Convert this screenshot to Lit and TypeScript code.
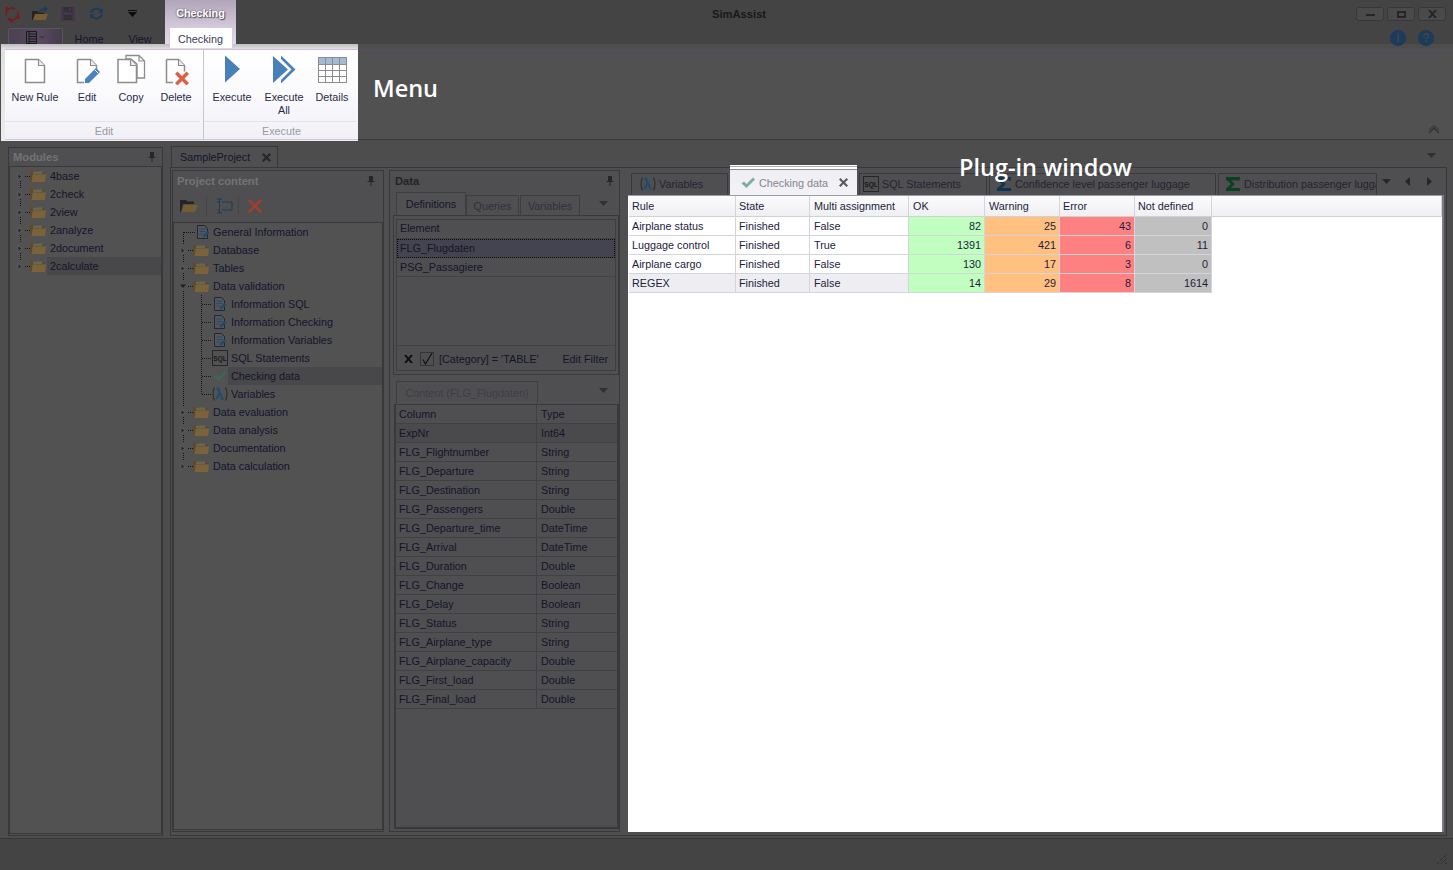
import { LitElement, html, svg, css } from "lit";
import { customElement } from "lit/decorators.js";

const folder = html`<svg class="ic" width="16" height="14" viewBox="0 0 16 14"><path d="M0 2h6l1.500 1.500H15V5H2.500L1 13H0z" fill="#5c4a2a"/><path d="M1.500 13 2.800 5.500H16L15 13z" fill="#7c6238"/><path d="M3 2.500h9V5H3z" fill="#8a8a7c" opacity=".4"/></svg>`;
const info = html`<svg class="ic" width="16" height="16" viewBox="0 0 16 16"><path d="M2.500 1.500h7l3 3v10h-10z" fill="#565659" stroke="#26262e"/><path d="M4.500 5h6M4.500 7.500h6M4.500 10h3" stroke="#214a72"/><path d="M7.500 13.500 8 11l4.500-4 2 2-4.500 4z" fill="#214a72"/></svg>`;
const sql = html`<svg class="ic" width="16" height="16" viewBox="0 0 16 16"><rect x=".5" y=".5" width="15" height="15" fill="none" stroke="#26262a"/><text x="8" y="11" font-size="6.500" font-weight="700" text-anchor="middle" font-family="Liberation Sans" fill="#18181a">SQL</text></svg>`;
const check = (c = "#3e6658") => html`<svg class="ic" width="16" height="16" viewBox="0 0 16 16"><path d="M1.500 8.500 4 6.500l2.500 2.500L13 2.500l2 2-8.500 8.500z" fill="${c}"/></svg>`;
const lambda = html`<svg class="ic" width="16" height="16" viewBox="0 0 16 16"><path d="M2.500 1.500C.6 5 .6 11 2.500 14.500M13.500 1.500c1.900 3.500 1.900 9.500 0 13" fill="none" stroke="#2e2e32" stroke-width="1.200"/><path d="M4.500 2.500H6l4.500 10.500h1M7.500 7 4.500 13" fill="none" stroke="#214a72" stroke-width="2.200"/></svg>`;
const sigma = (c: string) => html`<svg class="ic" width="16" height="16" viewBox="0 0 16 16"><path d="M1 1h14v3.500h-9l4 3.500-4 4h9V15H1v-2.500L6 8 1 3.500z" fill="${c}"/></svg>`;
const pin = html`<svg class="pin" width="8" height="10" viewBox="0 0 8 10"><path d="M2 0h4v5h1.500v1H4.500v4h-1V6H.5V5H2z" fill="#26262a"/></svg>`;
const drop = html`<svg class="drop" width="9" height="5" viewBox="0 0 9 5"><path d="M0 0h9L4.500 5z" fill="#303032"/></svg>`;

const dots = "stroke:#141416;stroke-dasharray:1 1;fill:none";

function rootGutter(kind: string, top: boolean, bottom: boolean) {
  return html`<svg class="gut" width="19" height="18" viewBox="0 0 19 18">
    ${top ? svg`<path d="M9.500 0v4" style=${dots}/>` : ""}
    ${bottom ? svg`<path d="M9.500 14v4" style=${dots}/>` : ""}
    <path d="M14 9.500h5" style=${dots}/>
    ${kind === "open"
      ? svg`<path d="M6 7.500h6l-3 3.500z" fill="#1f1f21"/>`
      : svg`<path d="M7 6.500v6l4-3z" fill="#2a2a2c" stroke="#767678" stroke-width=".5"/>`}
  </svg>`;
}
const infoGutter = html`<svg class="gut" width="21" height="18" viewBox="0 0 21 18"><path d="M9.500 9v9M10 9.500h11" style=${dots}/></svg>`;
function childGutter(last: boolean) {
  return html`<svg class="gut" width="38" height="18" viewBox="0 0 38 18"><path d="M9.500 0v18M27.500 0v${last ? 10 : 18}M28 9.500h10" style=${dots}/></svg>`;
}

const modules = ["4base", "2check", "2view", "2analyze", "2document", "2calculate"];
const project: { t: string; k: string; i?: any; sel?: boolean; last?: boolean }[] = [
  { t: "General Information", k: "info" },
  { t: "Database", k: "closed" },
  { t: "Tables", k: "closed" },
  { t: "Data validation", k: "open" },
  { t: "Information SQL", k: "child", i: info },
  { t: "Information Checking", k: "child", i: info },
  { t: "Information Variables", k: "child", i: info },
  { t: "SQL Statements", k: "child", i: sql },
  { t: "Checking data", k: "child", i: check(), sel: true },
  { t: "Variables", k: "child", i: lambda, last: true },
  { t: "Data evaluation", k: "closed" },
  { t: "Data analysis", k: "closed" },
  { t: "Documentation", k: "closed" },
  { t: "Data calculation", k: "closed" },
];
const columns: [string, string][] = [
  ["ExpNr", "Int64"], ["FLG_Flightnumber", "String"], ["FLG_Departure", "String"], ["FLG_Destination", "String"],
  ["FLG_Passengers", "Double"], ["FLG_Departure_time", "DateTime"], ["FLG_Arrival", "DateTime"], ["FLG_Duration", "Double"],
  ["FLG_Change", "Boolean"], ["FLG_Delay", "Boolean"], ["FLG_Status", "String"], ["FLG_Airplane_type", "String"],
  ["FLG_Airplane_capacity", "Double"], ["FLG_First_load", "Double"], ["FLG_Final_load", "Double"],
];
const results: (string | number)[][] = [
  ["Airplane status", "Finished", "False", 82, 25, 43, 0],
  ["Luggage control", "Finished", "True", 1391, 421, 6, 11],
  ["Airplane cargo", "Finished", "False", 130, 17, 3, 0],
  ["REGEX", "Finished", "False", 14, 29, 8, 1614],
];

const pageIcon = html`<svg class="big" width="32" height="32" viewBox="0 0 32 32"><path d="M6.500 6.500h13l6 6v17h-19z" fill="#fff" stroke="#8c8c8c" stroke-width="1.500"/><path d="M19.500 6.500v6h6" fill="#eee" stroke="#8c8c8c" stroke-width="1.200"/></svg>`;
const editIcon = html`<svg class="big" width="32" height="32" viewBox="0 0 32 32"><path d="M6.500 6.500h13l6 6v8M13 29.500H6.500v-23" fill="#fff" stroke="#8c8c8c" stroke-width="1.500"/><path d="M19.500 6.500v6h6" fill="#eee" stroke="#8c8c8c" stroke-width="1.200"/><path d="M14 26 25 15l4 4-11 11h-4z" fill="#4a82bd"/><path d="M24 17l3 3" stroke="#fff"/></svg>`;
const copyIcon = html`<svg class="big" width="32" height="32" viewBox="0 0 32 32"><path d="M11 2.500h13l5.500 5.500v17H22V11l-6-5h-5z" fill="#fff" stroke="#8c8c8c" stroke-width="1.300"/><path d="M24 2.500v5.500h5.500" fill="none" stroke="#8c8c8c" stroke-width="1.200"/><path d="M3 6.500h12.500l6 6v17H3z" fill="#fff" stroke="#8c8c8c" stroke-width="1.500"/><path d="M15.500 6.500v6h6" fill="#eee" stroke="#8c8c8c" stroke-width="1.200"/></svg>`;
const delIcon = html`<svg class="big" width="32" height="32" viewBox="0 0 32 32"><path d="M6.500 6.500h12l6 6v6M13 29.500H6.500v-23" fill="#fff" stroke="#8c8c8c" stroke-width="1.500"/><path d="M18.500 6.500v6h6" fill="#eee" stroke="#8c8c8c" stroke-width="1.200"/><path d="M15 21l2.500-2.500 4.500 4.500 4.500-4.500L29 21l-4.500 4.500L29 30l-2.500 2.500L22 28l-4.500 4.500L15 30l4.500-4.500z" fill="#dc6045"/></svg>`;
const exeIcon = html`<svg class="big" width="32" height="32" viewBox="0 0 32 32"><path d="M9 2.500v27l15-13.500z" fill="#4a80ba"/></svg>`;
const exeAllIcon = html`<svg class="big" width="32" height="32" viewBox="0 0 32 32"><path d="M13 2.500l14.500 14L13 30.500z" fill="#4a80ba"/><path d="M13 6 23.500 16.500 13 27z" fill="#fff"/><path d="M5 3 20 16.500 5 30z" fill="#4a80ba"/></svg>`;
const gridIcon = html`<svg class="big" width="32" height="32" viewBox="0 0 32 32"><rect x="2.500" y="4.500" width="28" height="25" fill="#fff" stroke="#8c8c8c"/><rect x="3" y="5" width="27" height="6" fill="#a3bcd6"/><path d="M9.500 5v24M16.500 5v24M23.500 5v24" stroke="#8c8c8c"/><path d="M3 11.500h27M3 17.500h27M3 23.500h27" stroke="#8c8c8c"/></svg>`;

@customElement("app-root")
export class AppRoot extends LitElement {
  static styles = css`
    :host { display: block; width: 1453px; height: 870px; overflow: hidden; position: relative; background: #4d4d4e;
      font: 10.8px "Liberation Sans", Arial, sans-serif; color: #14142a; }
    * { box-sizing: border-box; }
    svg { display: block; flex: none; }
    .app { display: flex; flex-direction: column; height: 870px; }
    .top { display: grid; grid-template-columns: 165px 71px 1fr; grid-template-rows: 27px 17px; height: 44px; background: #444445; }
    .qat { display: flex; align-items: center; padding-left: 4px; gap: 12px; }
    .qat .slot { width: 16px; display: flex; justify-content: center; }
    .qat .slot.last { margin-left: 8px; }
    .ctx { grid-row: 1 / 3; grid-column: 2; background: linear-gradient(#b0a6b9, #d2c8d9 60%, #e2dae7); display: flex; flex-direction: column; align-items: center; position: relative; z-index: 3; }
    .ctx-t { height: 28px; line-height: 27px; color: #fff; text-shadow: 0 0 2px #5a5060, 1px 1px 1px #5a5060; font-weight: 700; }
    .ctx-tab { width: 64px; height: 21px; background: #fff; border: 1px solid #d8c8e2; border-bottom: 0; text-align: center; line-height: 22px; color: #3a3a58; }
    .title { display: flex; align-items: center; padding-left: 476px; font-weight: 700; font-size: 11.2px; color: #18181a; }
    .wins { margin-left: auto; display: flex; gap: 3px; padding: 7px 7px 0 0; align-self: start; }
    .win { width: 28px; height: 14px; border: 1px solid #38383a; border-radius: 3px; display: flex; align-items: center; justify-content: center; background: #4a4a4b; }
    .tabs { display: flex; align-items: flex-start; padding: 1px 0 0 8px; height: 17px; }
    .appbtn { width: 55px; height: 19px; border: 1px solid #5a5460; border-radius: 2px; background: linear-gradient(90deg, #4b4152, #574a60 60%, #443b4b); display: flex; align-items: center; justify-content: center; gap: 2px; position: relative; }
    .tb { line-height: 22px; text-align: center; color: #14142a; }
    .tb.h { width: 52px; }
    .tb.v { width: 50px; }
    .help { display: flex; justify-content: flex-end; gap: 12px; padding: 3px 19px 0 0; }
    .circ { width: 16px; height: 16px; border-radius: 50%; background: #1b3c5c; color: #444445; font: 700 12px/16px "Liberation Sans", sans-serif; text-align: center; }
    .ribbon { display: flex; height: 97px; flex: none; }
    .hl { width: 357px; margin-left: 1px; padding: 5px 0 1px 4px; background: linear-gradient(#bdbdbd, #e0e0e0 5px, #ececee); position: relative; z-index: 2; }
    .hl-in { height: 91px; background: linear-gradient(#fff, #fafafd 50%, #f0f0f6); border-top: 1px solid #d4bae4; border-bottom: 1px solid #d8c6e2; display: grid; grid-template-columns: 198px 156px; }
    .grp { display: flex; flex-direction: column; }
    .grp + .grp { border-left: 1px solid #c8c8cc; }
    .btns { display: grid; height: 72px; border-bottom: 1px solid #e2e2e8; margin: 0 3px 0 0; padding-top: 3px; }
    .g1 { grid-template-columns: 60px 44px 44px 46px; }
    .g2 { grid-template-columns: 56px 48px 48px; }
    .b { display: flex; flex-direction: column; align-items: center; text-align: center; line-height: 13px; color: #2a2a48; }
    .b .big { margin-bottom: 6px; }
    .cap { text-align: center; color: #9a9aa4; line-height: 18px; height: 18px; }
    .rrest { flex: 1; margin: 4px 0 1px; background: #515152; border-top: 1px solid #54495a; border-bottom: 1px solid #38383a; display: flex; align-items: flex-end; justify-content: flex-end; padding: 0 13px 5px 0; }
    .work { flex: 1; min-height: 0; display: flex; gap: 7px; padding: 6px 6px 2px 8px; background: #4d4d4e; }
    .modules { width: 155px; border: 1px solid #38383a; display: flex; flex-direction: column; background: #515152; }
    .ph { height: 18px; flex: none; display: flex; align-items: center; justify-content: space-between; padding: 0 6px 0 4px; font-weight: 700; font-size: 11.2px; color: #737375; background: #4f4f51; }
    .ph.on { color: #232325; padding-left: 5px; padding-right: 5px; }
    .ph.pc { padding-right: 8px; }
    .box { flex: 1; min-height: 0; border: 1px solid #38383a; background: #525253; }
    .row { height: 18px; display: flex; align-items: center; }
    .row .ic { flex: none; }
    .lab { flex: 1; height: 18px; line-height: 18px; margin-left: 1px; padding-left: 3px; white-space: nowrap; color: #14142a; }
    .lab.sel { background: #48484a; }
    .modules .box { margin: 0 0 1px 0; padding-left: 1px; }
    .doc { flex: 1; min-width: 0; display: flex; flex-direction: column; margin-top: -1px; }
    .dstrip { height: 21px; flex: none; display: flex; align-items: flex-end; padding-left: 1px; justify-content: space-between; }
    .dstrip .drop { margin: 0 11px 9px 0; }
    .dtab { width: 107px; height: 21px; border: 1px solid #38383a; border-bottom: 0; background: #4f4f51; display: flex; align-items: center; justify-content: space-between; padding: 0 6px 0 8px; color: #14142a; }
    .dbody { flex: 1; min-height: 0; border: 1px solid #38383a; padding: 2px 1px 3px 1px; display: flex; gap: 5px; background: #4f4f51; }
    .pcontent { width: 212px; border: 1px solid #38383a; padding-top: 1px; display: flex; flex-direction: column; }
    .pcontent .box { margin: 0 0 1px 0; }
    .pcontent .lab { padding-left: 3px; margin-left: 0; }
    .pcontent .lab.r { padding-left: 4px; }
    .pcontent .lab.g { padding-left: 2px; }
    .ptool { height: 32px; flex: none; display: flex; align-items: center; padding-left: 7px; }
    .ptool .sepv { width: 1px; height: 18px; background: #454547; margin: 0 8px 0 5px; }
    .ptool .f { margin-right: 3px; }
    .data { width: 231px; border: 1px solid #38383a; padding-top: 1px; display: flex; flex-direction: column; }
    .dtabs { height: 25px; flex: none; display: flex; align-items: flex-end; padding: 0 0 0 6px; }
    .dtabs .drop { margin: 0 11px 9px auto; }
    .t2 { height: 20px; border: 1px solid #3e3e40; border-bottom: 0; line-height: 20px; text-align: center; color: #30303c; margin-right: 1px; }
    .t2.q { width: 53px; }
    .t2.v { width: 60px; }
    .t2.act { width: 70px; height: 23px; line-height: 22px; background: #515153; margin-right: 0; color: #14142a; }
    .t2.w { width: 142px; height: 23px; line-height: 23px; color: #3e3e48; }
    .dbox { height: 160px; flex: none; margin: 0 0 0 3px; width: 226px; border: 1px solid #3a3a3c; padding: 3px 2px; }
    .dinner { height: 100%; border: 1px solid #3e3e40; display: flex; flex-direction: column; }
    .drow { height: 19px; line-height: 18px; padding-left: 3px; border-bottom: 1px solid #434345; flex: none; color: #14142a; }
    .drow.h { line-height: 16px; }
    .drow.sel { background: #43444f; outline: 1px dotted #0a0a0a; outline-offset: -1px; }
    .fill { flex: 1; }
    .filter { height: 25px; border-top: 1px solid #434345; display: flex; align-items: center; padding: 2px 0 0 7px; flex: none; }
    .filter .ck { width: 14px; height: 14px; border: 1px solid #343436; margin: 0 5px 0 7px; }
    .filter .ef { margin-left: auto; padding-right: 7px; }
    .mid { height: 29px; flex: none; display: flex; align-items: flex-end; padding-left: 6px; }
    .mid .drop { margin: 0 11px 11px auto; }
    .cgrid { flex: 1; min-height: 0; margin: 0 0 2px 4px; width: 225px; border: 2px solid #39393b; border-top-width: 1px; }
    .crow { display: grid; grid-template-columns: 140px 1fr; height: 19px; border-bottom: 1px solid #414143; line-height: 18px; }
    .crow > div { padding-left: 3px; color: #14142a; }
    .crow > div + div { border-left: 1px solid #414143; padding-left: 4px; }
    .crow.sel { background: #4a4a4c; }
    .plugin { flex: 1; min-width: 0; display: flex; flex-direction: column; }
    .ptabs { height: 25px; flex: none; display: flex; align-items: flex-end; padding-left: 6px; gap: 2px; }
    .pt { height: 22px; border: 1px solid #3a3a3c; border-bottom: 0; display: flex; align-items: center; gap: 3px; padding: 0 0 2px 8px; color: #24242e; white-space: nowrap; overflow: hidden; flex: none; }
    .pt.a { width: 97px; }
    .pt.c { width: 128px; padding-left: 3px; }
    .pt.d { width: 227px; padding-left: 6px; }
    .pt.e { width: 159px; padding-left: 6px; }
    .pt.act { width: 127px; height: 30px; background: linear-gradient(#fff 0 1px, #aeaeae 1px 2px, #fff 2px 4px, #8c8c94 4px 5px, #eeeef3 5px, #f3f3f7); color: #85858d; padding: 5px 9px 0 10px; position: relative; z-index: 1; border: 0; }
    .pt.act span { flex: 1; }
    .nav { display: flex; align-items: center; gap: 14px; padding: 0 0 6px 3px; height: 22px; }
    .nav .s { margin-left: 3px; }
    .wbox { flex: 1; min-height: 0; margin: 0 3px 0 3px; background: #fff; border-top: 1px solid #9c9ca8; box-shadow: 2px 0 0 #7a7a88; display: flex; flex-direction: column; padding: 0 0 0 1px; }
    .tg { display: grid; grid-template-columns: 107px 74px 99px 76px 75px 75px 77px 1fr; }
    .th { height: 21px; background: linear-gradient(#fbfbfc, #f0f0f3); border-right: 1px solid #d4d4dc; border-bottom: 1px solid #d0d0d8; padding-left: 3px; line-height: 20px; color: #1c1c40; }
    .th.wide { padding-left: 4px; }
    .th:last-child { border-right: 0; }
    .td { height: 19px; border-right: 1px solid #d4d4dc; border-bottom: 1px solid #d4d4dc; padding: 0 3px; line-height: 18px; color: #1c1c40; }
    .td.wide { padding-left: 4px; }
    .td.alt { background: #eeeef2; }
    .td.n { text-align: right; }
    .ok { background: #c0ffc0 !important; }
    .warn { background: #ffc080 !important; }
    .err { background: #ff8080 !important; }
    .nd { background: #c0c0c0 !important; }
    .spacer { grid-column: 8; }
    .status { height: 32px; flex: none; background: #444445; border-top: 1px solid #38383a; display: flex; align-items: flex-end; justify-content: flex-end; padding: 0 5px 5px 0; }
    .note { position: absolute; font: 600 23.5px/32px "Open Sans", sans-serif; color: #fff; white-space: nowrap; z-index: 5; }
    .note.m { left: 373px; top: 72px; }
    .note.p { left: 959px; top: 151px; }
  `;

  render() {
    return html`<div class="app">
      <div class="top">
        <div class="qat">
          <div class="slot"><svg width="18" height="18" viewBox="0 0 18 18"><circle cx="9" cy="9" r="6" fill="none" stroke="#6e1c1c" stroke-width="1.500" stroke-dasharray="14 3"/><circle cx="4" cy="4" r="2" fill="#7a1c1c"/><circle cx="15" cy="12" r="2" fill="#7a1c1c"/><circle cx="8" cy="15.500" r="2" fill="#7a1c1c"/></svg></div>
          <div class="slot"><svg width="18" height="16" viewBox="0 0 18 16"><path d="M1 5h5l1.500 1.500H13V14H1z" fill="#242426"/><path d="M2 14l2-6h13l-2.500 6z" fill="#765c30"/><path d="M7 7c0-3 3-4.500 6-4.500V0l4 3-4 3V4c-2 0-4 1-6 3z" fill="#1b3c5c"/></svg></div>
          <div class="slot"><svg width="16" height="16" viewBox="0 0 16 16"><path d="M1 1h13l1 1v13H1z" fill="#46344f"/><path d="M3.500 1h9v5h-9zM3.500 9h9v5h-9z" fill="#323234"/><rect x="9" y="2" width="2" height="3" fill="#46344f"/></svg></div>
          <div class="slot"><svg width="17" height="15" viewBox="0 0 17 15"><path d="M2 7a6.500 6.500 0 0 1 11-3.500L15 2v5h-5l2-1.500A4.500 4.500 0 0 0 4 7zM15 8a6.500 6.500 0 0 1-11 3.500L2 13V8h5L5 9.500A4.500 4.500 0 0 0 13 8z" fill="#1b3c5c"/></svg></div>
          <div class="slot last"><svg width="9" height="7" viewBox="0 0 9 7"><path d="M0 0h9v1H0zM0 2h9L4.500 7z" fill="#0c0c0c"/></svg></div>
        </div>
        <div class="ctx">
          <div class="ctx-t">Checking</div>
          <div class="ctx-tab">Checking</div>
        </div>
        <div class="title"><span>SimAssist</span>
          <div class="wins">
            <div class="win"><svg width="9" height="3" viewBox="0 0 9 3"><rect y="1" width="9" height="2" fill="#262628"/></svg></div>
            <div class="win"><svg width="9" height="7" viewBox="0 0 9 7"><path d="M0 0h9v7H0zM2 2v3h5V2z" fill="#262628" fill-rule="evenodd"/></svg></div>
            <div class="win"><svg width="9" height="8" viewBox="0 0 9 8"><path d="M0 0h2.500l2 2.500L6.500 0H9L5.800 4 9 8H6.500l-2-2.500L2.500 8H0l3.200-4z" fill="#262628"/></svg></div>
          </div>
        </div>
        <div class="tabs">
          <div class="appbtn"><svg width="11" height="13" viewBox="0 0 11 13"><path d="M.5.5h10v12H.5zM3 .5v12M3 3h7M3 5.500h7M3 8h7M3 10.500h7" fill="none" stroke="#1a1a1a"/></svg><svg width="6" height="3" viewBox="0 0 6 3"><path d="M0 0h6L3 3z" fill="#403648"/></svg></div>
          <div class="tb h">Home</div><div class="tb v">View</div>
        </div>
        <div class="help"><div class="circ">i</div><div class="circ">?</div></div>
      </div>
      <div class="ribbon">
        <div class="hl"><div class="hl-in">
          <div class="grp">
            <div class="btns g1">
              <div class="b">${pageIcon}New Rule</div>
              <div class="b">${editIcon}Edit</div>
              <div class="b">${copyIcon}Copy</div>
              <div class="b">${delIcon}Delete</div>
            </div>
            <div class="cap">Edit</div>
          </div>
          <div class="grp">
            <div class="btns g2">
              <div class="b">${exeIcon}Execute</div>
              <div class="b">${exeAllIcon}Execute<br />All</div>
              <div class="b">${gridIcon}Details</div>
            </div>
            <div class="cap">Execute</div>
          </div>
        </div></div>
        <div class="rrest"><svg width="12" height="9" viewBox="0 0 12 9"><path d="M1 8l5-5 5 5" fill="none" stroke="#323234" stroke-width="1.500"/><path d="M1 5 6 .5 11 5" fill="none" stroke="#323234"/></svg></div>
      </div>
      <div class="work">
        <div class="modules">
          <div class="ph"><span>Modules</span>${pin}</div>
          <div class="box">
            ${modules.map((m, i) => html`<div class="row">${rootGutter("closed", i > 0, i < 5)}${folder}<div class="lab ${i === 5 ? "sel" : ""}">${m}</div></div>`)}
          </div>
        </div>
        <div class="doc">
          <div class="dstrip">
            <div class="dtab"><span>SampleProject</span><svg width="9" height="9" viewBox="0 0 9 9"><path d="M0 1.500 1.500 0l3 3 3-3L9 1.500l-3 3 3 3L7.500 9l-3-3-3 3L0 7.500l3-3z" fill="#262628"/></svg></div>
            ${drop}
          </div>
          <div class="dbody">
            <div class="pcontent">
              <div class="ph pc"><span>Project content</span>${pin}</div>
              <div class="ptool">
                <svg class="f" width="18" height="14" viewBox="0 0 18 14"><path d="M0 1h6l1.500 1.500H14V5H3L1 13H0z" fill="#242426"/><path d="M1.500 13 4 6h14l-3 7z" fill="#765c30"/></svg>
                <span class="sepv"></span>
                <svg width="18" height="16" viewBox="0 0 18 16"><path d="M4.500 1v14M2 1h5M2 15h5M7 4h10v8H7M2 4h2M2 12h2" fill="none" stroke="#1b3c5c"/></svg>
                <span class="sepv"></span>
                <svg width="16" height="16" viewBox="0 0 16 16"><path d="M1 2.500 2.500 1 8 6.500 13.500 1 15 2.500 9.500 8l5.500 5.500-1.500 1.500L8 9.500 2.500 15 1 13.500 6.500 8z" fill="#ac3c28"/></svg>
              </div>
              <div class="box">
                ${project.map((p, i) => p.k === "info"
                  ? html`<div class="row">${infoGutter}${info}<div class="lab g">${p.t}</div></div>`
                  : p.k === "child"
                  ? html`<div class="row">${childGutter(!!p.last)}${p.i}<div class="lab ${p.sel ? "sel" : ""}">${p.t}</div></div>`
                  : html`<div class="row">${rootGutter(p.k, true, i < project.length - 1)}${folder}<div class="lab r">${p.t}</div></div>`)}
              </div>
            </div>
            <div class="data">
              <div class="ph on"><span>Data</span>${pin}</div>
              <div class="dtabs">
                <div class="t2 act">Definitions</div><div class="t2 q">Queries</div><div class="t2 v">Variables</div>${drop}
              </div>
              <div class="dbox"><div class="dinner">
                <div class="drow h">Element</div>
                <div class="drow sel">FLG_Flugdaten</div>
                <div class="drow">PSG_Passagiere</div>
                <div class="fill"></div>
                <div class="filter">
                  <svg width="9" height="8" viewBox="0 0 9 8"><path d="M0 0h2.500l2 2.500L6.500 0H9L5.800 4 9 8H6.500l-2-2.500L2.500 8H0l3.200-4z" fill="#101012"/></svg>
                  <div class="ck"><svg width="12" height="12" viewBox="0 0 12 12"><path d="M2 6.500 4.500 11 11 0" fill="none" stroke="#101012" stroke-width="1.200"/></svg></div>
                  <span>[Category] = 'TABLE'</span><span class="ef">Edit Filter</span>
                </div>
              </div></div>
              <div class="mid"><div class="t2 w">Content (FLG_Flugdaten)</div>${drop}</div>
              <div class="cgrid">
                <div class="crow"><div>Column</div><div>Type</div></div>
                ${columns.map((c, i) => html`<div class="crow ${i === 0 ? "sel" : ""}"><div>${c[0]}</div><div>${c[1]}</div></div>`)}
              </div>
            </div>
            <div class="plugin">
              <div class="ptabs">
                <div class="pt a">${lambda}<span>Variables</span></div>
                <div class="pt act">${check("#7fae9c")}<span>Checking data</span><svg width="9" height="9" viewBox="0 0 9 9"><path d="M0 1.500 1.500 0l3 3 3-3L9 1.500l-3 3 3 3L7.500 9l-3-3-3 3L0 7.500l3-3z" fill="#5a5a60"/></svg></div>
                <div class="pt c">${sql}<span>SQL Statements</span></div>
                <div class="pt d">${sigma("#0f3350")}<span>Confidence level passenger luggage</span></div>
                <div class="pt e">${sigma("#0c4024")}<span>Distribution passenger luggage</span></div>
                <div class="nav">
                  <svg width="9" height="5" viewBox="0 0 9 5"><path d="M0 0h9L4.500 5z" fill="#262628"/></svg>
                  <svg width="5" height="9" viewBox="0 0 5 9"><path d="M5 0v9L0 4.500z" fill="#262628"/></svg>
                  <svg class="s" width="5" height="9" viewBox="0 0 5 9"><path d="M0 0v9l5-4.500z" fill="#262628"/></svg>
                </div>
              </div>
              <div class="wbox">
                <div class="tg">
                  ${["Rule", "State", "Multi assignment", "OK", "Warning", "Error", "Not defined", ""].map((h, i) => html`<div class="th ${i >= 2 && i < 5 ? "wide" : ""}">${h}</div>`)}
                  ${results.map((r, ri) => html`
                    <div class="td ${ri === 3 ? "alt" : ""}">${r[0]}</div>
                    <div class="td ${ri === 3 ? "alt" : ""}">${r[1]}</div>
                    <div class="td wide ${ri === 3 ? "alt" : ""}">${r[2]}</div>
                    <div class="td n ok">${r[3]}</div>
                    <div class="td n warn">${r[4]}</div>
                    <div class="td n err">${r[5]}</div>
                    <div class="td n nd">${r[6]}</div>
                    <div class="spacer"></div>`)}
                </div>
              </div>
            </div>
          </div>
        </div>
      </div>
      <div class="status"><svg width="12" height="12" viewBox="0 0 12 12"><path d="M1 11 11 1M5 11l6-6M9 11l2-2" stroke="#262628" stroke-dasharray="1 1"/></svg></div>
      <div class="note m">Menu</div>
      <div class="note p">Plug-in window</div>
    </div>`;
  }
}
